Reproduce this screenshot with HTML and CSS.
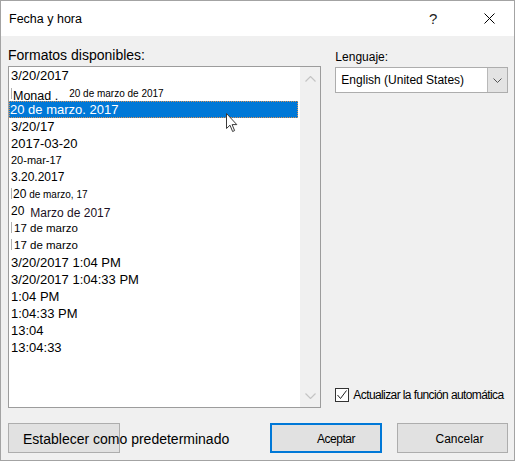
FILE: index.html
```html
<!DOCTYPE html>
<html lang="es">

<head>
    <meta charset="UTF-8">
    <meta name="viewport" content="width=device-width, initial-scale=1.0">
    <title>Fecha y hora</title>
    <link rel="stylesheet" href="styles.css">
</head>

<body>
    <div class="dialog">
        <div class="title-bar">
            <span class="title">Fecha y hora</span>
            <span class="help">?</span>
            <svg class="close" width="11" height="11" viewBox="0 0 11 11">
                <path d="M0.5 0.5 L10.5 10.5 M10.5 0.5 L0.5 10.5" stroke="#000" stroke-width="1" fill="none" />
            </svg>
        </div>

        <div class="dialog-body">
            <div class="main">
                <div class="formats">
                    <div class="field-label">Formatos disponibles:</div>
                    <div class="listbox">
                        <ul class="format-list">
                            <li class="size-13">3/20/2017</li>
                            <li class="caret monad-row"><span class="monad">Monad .</span><span class="raised-small">20 de marzo de 2017</span></li>
                            <li class="selected">20 de marzo. 2017</li>
                            <li class="size-13">3/20/17</li>
                            <li class="size-13">2017-03-20</li>
                            <li class="size-11">20-mar-17</li>
                            <li class="size-12">3.20.2017</li>
                            <li class="caret mixed"><span class="big">20</span> de marzo, 17</li>
                            <li class="size-12"><span class="raised">20</span><span class="month-text">Marzo de 2017</span></li>
                            <li class="caret size-115">17 de marzo</li>
                            <li class="caret size-115">17 de marzo</li>
                            <li class="size-13">3/20/2017 1:04 PM</li>
                            <li class="size-13">3/20/2017 1:04:33 PM</li>
                            <li class="size-13">1:04 PM</li>
                            <li class="size-13">1:04:33 PM</li>
                            <li class="size-13">13:04</li>
                            <li class="size-13">13:04:33</li>
                        </ul>
                        <div class="scrollbar">
                            <svg width="11" height="6" viewBox="0 0 11 6">
                                <polyline points="0.5,5.5 5.5,0.5 10.5,5.5" stroke="#c4c4c4" stroke-width="1.2" fill="none" />
                            </svg>
                            <svg width="11" height="6" viewBox="0 0 11 6">
                                <polyline points="0.5,0.5 5.5,5.5 10.5,0.5" stroke="#c4c4c4" stroke-width="1.2" fill="none" />
                            </svg>
                        </div>
                        <!-- mouse pointer sitting over the selected row -->
                        <svg class="pointer" width="12" height="20" viewBox="0 0 12 20">
                            <path d="M0.5 0.5 L0.5 15.5 L4 12.2 L6.6 18.5 L8.6 17.6 L6.1 11.6 L10.8 11.6 Z" fill="#fff" stroke="#3a3a3a" stroke-width="1" stroke-linejoin="round" />
                        </svg>
                    </div>
                </div>

                <div class="language">
                    <div class="field-label small">Lenguaje:</div>
                    <div class="combo">
                        <span class="combo-value">English (United States)</span>
                        <span class="combo-button">
                            <svg width="9" height="5" viewBox="0 0 9 5">
                                <polyline points="0.5,0.5 4.5,4.5 8.5,0.5" stroke="#555" stroke-width="1" fill="none" />
                            </svg>
                        </span>
                    </div>
                    <div class="auto-update">
                        <span class="checkbox">
                            <svg width="12" height="12" viewBox="0 0 12 12">
                                <polyline points="1.5,6 4.5,9.5 10.5,1.5" stroke="#222" stroke-width="1" fill="none" />
                            </svg>
                        </span>
                        <span class="auto-text">Actualizar la función automática</span>
                    </div>
                </div>
            </div>

            <div class="buttons">
                <button class="btn btn-default">Establecer como predeterminado</button>
                <button class="btn btn-ok">Aceptar</button>
                <button class="btn btn-cancel">Cancelar</button>
            </div>
        </div>
    </div>
</body>

</html>
```

FILE: styles.css
```css
body {
    margin: 0;
    font-family: "Liberation Sans", Arial, sans-serif;
    color: #000;
}

.dialog {
    width: 515px;
    height: 461px;
    box-sizing: border-box;
    border: 1px solid #a3a3a3;
    background-color: #f0f0f0;
    display: flex;
    flex-direction: column;
}

/* title bar */
.title-bar {
    height: 35px;
    background-color: #fff;
    display: flex;
    align-items: center;
    padding: 0 19px 0 8px;
}

.title {
    flex: 1;
    font-size: 12.5px;
}

.help {
    font-size: 15px;
    width: 8px;
    margin-right: 47px;
    color: #222;
}

.close {
    display: block;
}

/* body */
.dialog-body {
    flex: 1;
    display: flex;
    flex-direction: column;
}

.main {
    display: flex;
    gap: 14px;
    padding: 11px 6px 0 7px;
}

.field-label {
    font-size: 14px;
    line-height: 16px;
    margin-bottom: 3px;
}

.field-label.small {
    font-size: 12px;
    line-height: 15px;
    margin: 3px 0 2px;
}

.formats {
    width: 314px;
}

.listbox {
    position: relative;
    height: 342px;
    box-sizing: border-box;
    border: 1px solid #9c9c9c;
    background-color: #fff;
    display: flex;
}

.format-list {
    list-style-type: none;
    margin: 0;
    padding: 0 2px 0 0;
    flex: 1;
}

.format-list li {
    height: 17px;
    line-height: 17px;
    padding-left: 2px;
    white-space: nowrap;
    box-sizing: border-box;
}

.size-13 { font-size: 13px; }
.size-12 { font-size: 12px; }
.size-115 { font-size: 11.5px; }
.size-11 { font-size: 11px; }

.format-list li.caret::before {
    content: "";
    display: inline-block;
    width: 1px;
    height: 11px;
    background-color: #b0b0b0;
    vertical-align: -1px;
    margin-right: 1px;
}

.format-list li.size-115.caret::before {
    margin-right: 2px;
}

.monad-row .monad {
    font-size: 12.5px;
    vertical-align: -2px;
}

.monad-row .raised-small {
    font-size: 10px;
    margin-left: 11px;
    vertical-align: 1px;
}

.format-list li.selected {
    background-color: #0078d7;
    color: #fff;
    font-size: 13px;
    padding-left: 0;
    border: 1px dotted #d4925a;
    line-height: 15px;
}

.format-list li.mixed {
    font-size: 10px;
}

.mixed .big {
    font-size: 12px;
}

.raised {
    vertical-align: 2px;
}

.month-text {
    margin-left: 6px;
    color: #1c1024;
}

.scrollbar {
    width: 20px;
    background-color: #f0f0f0;
    display: flex;
    flex-direction: column;
    justify-content: space-between;
    align-items: center;
    padding: 9px 0 8px;
    box-sizing: border-box;
}

.scrollbar svg {
    display: block;
}

.pointer {
    position: absolute;
    left: 217px;
    top: 46px;
}

/* right column */
.language {
    width: 173px;
    display: flex;
    flex-direction: column;
}

.combo {
    height: 26px;
    box-sizing: border-box;
    border: 1px solid #adadad;
    background-color: #fff;
    display: flex;
    align-items: center;
}

.combo-value {
    flex: 1;
    font-size: 12px;
    padding-left: 5px;
}

.combo-button {
    width: 20px;
    height: 24px;
    box-sizing: border-box;
    background-color: #e3e3e3;
    border-left: 1px solid #b9b9b9;
    display: flex;
    align-items: center;
    justify-content: center;
}

.combo-button svg {
    display: block;
}

.auto-update {
    margin-top: auto;
    margin-bottom: 6px;
    display: flex;
    align-items: center;
}

.checkbox {
    width: 14px;
    height: 14px;
    box-sizing: border-box;
    border: 1px solid #333;
    background-color: #fff;
    display: flex;
    align-items: center;
    justify-content: center;
}

.checkbox svg {
    display: block;
}

.auto-text {
    font-size: 12px;
    letter-spacing: -0.6px;
    margin-left: 4px;
    white-space: nowrap;
}

/* bottom buttons */
.buttons {
    display: flex;
    gap: 15px;
    padding: 15px 6px 0 7px;
}

.btn {
    height: 30px;
    box-sizing: border-box;
    border: 1px solid #adadad;
    background-color: #e1e1e1;
    font-family: "Liberation Sans", Arial, sans-serif;
    color: #000;
    display: flex;
    align-items: center;
    padding: 2px 0 0;
    white-space: nowrap;
}

.btn-default {
    width: 112px;
    font-size: 14px;
    padding-left: 14px;
    overflow: visible;
}

.btn-ok {
    width: 112px;
    margin-left: auto;
    border: 2px solid #0078d7;
    font-size: 12px;
    letter-spacing: -0.5px;
    justify-content: center;
    padding-left: 20px;
}

.btn-cancel {
    width: 111px;
    font-size: 12px;
    justify-content: center;
    padding-left: 14px;
}
```
